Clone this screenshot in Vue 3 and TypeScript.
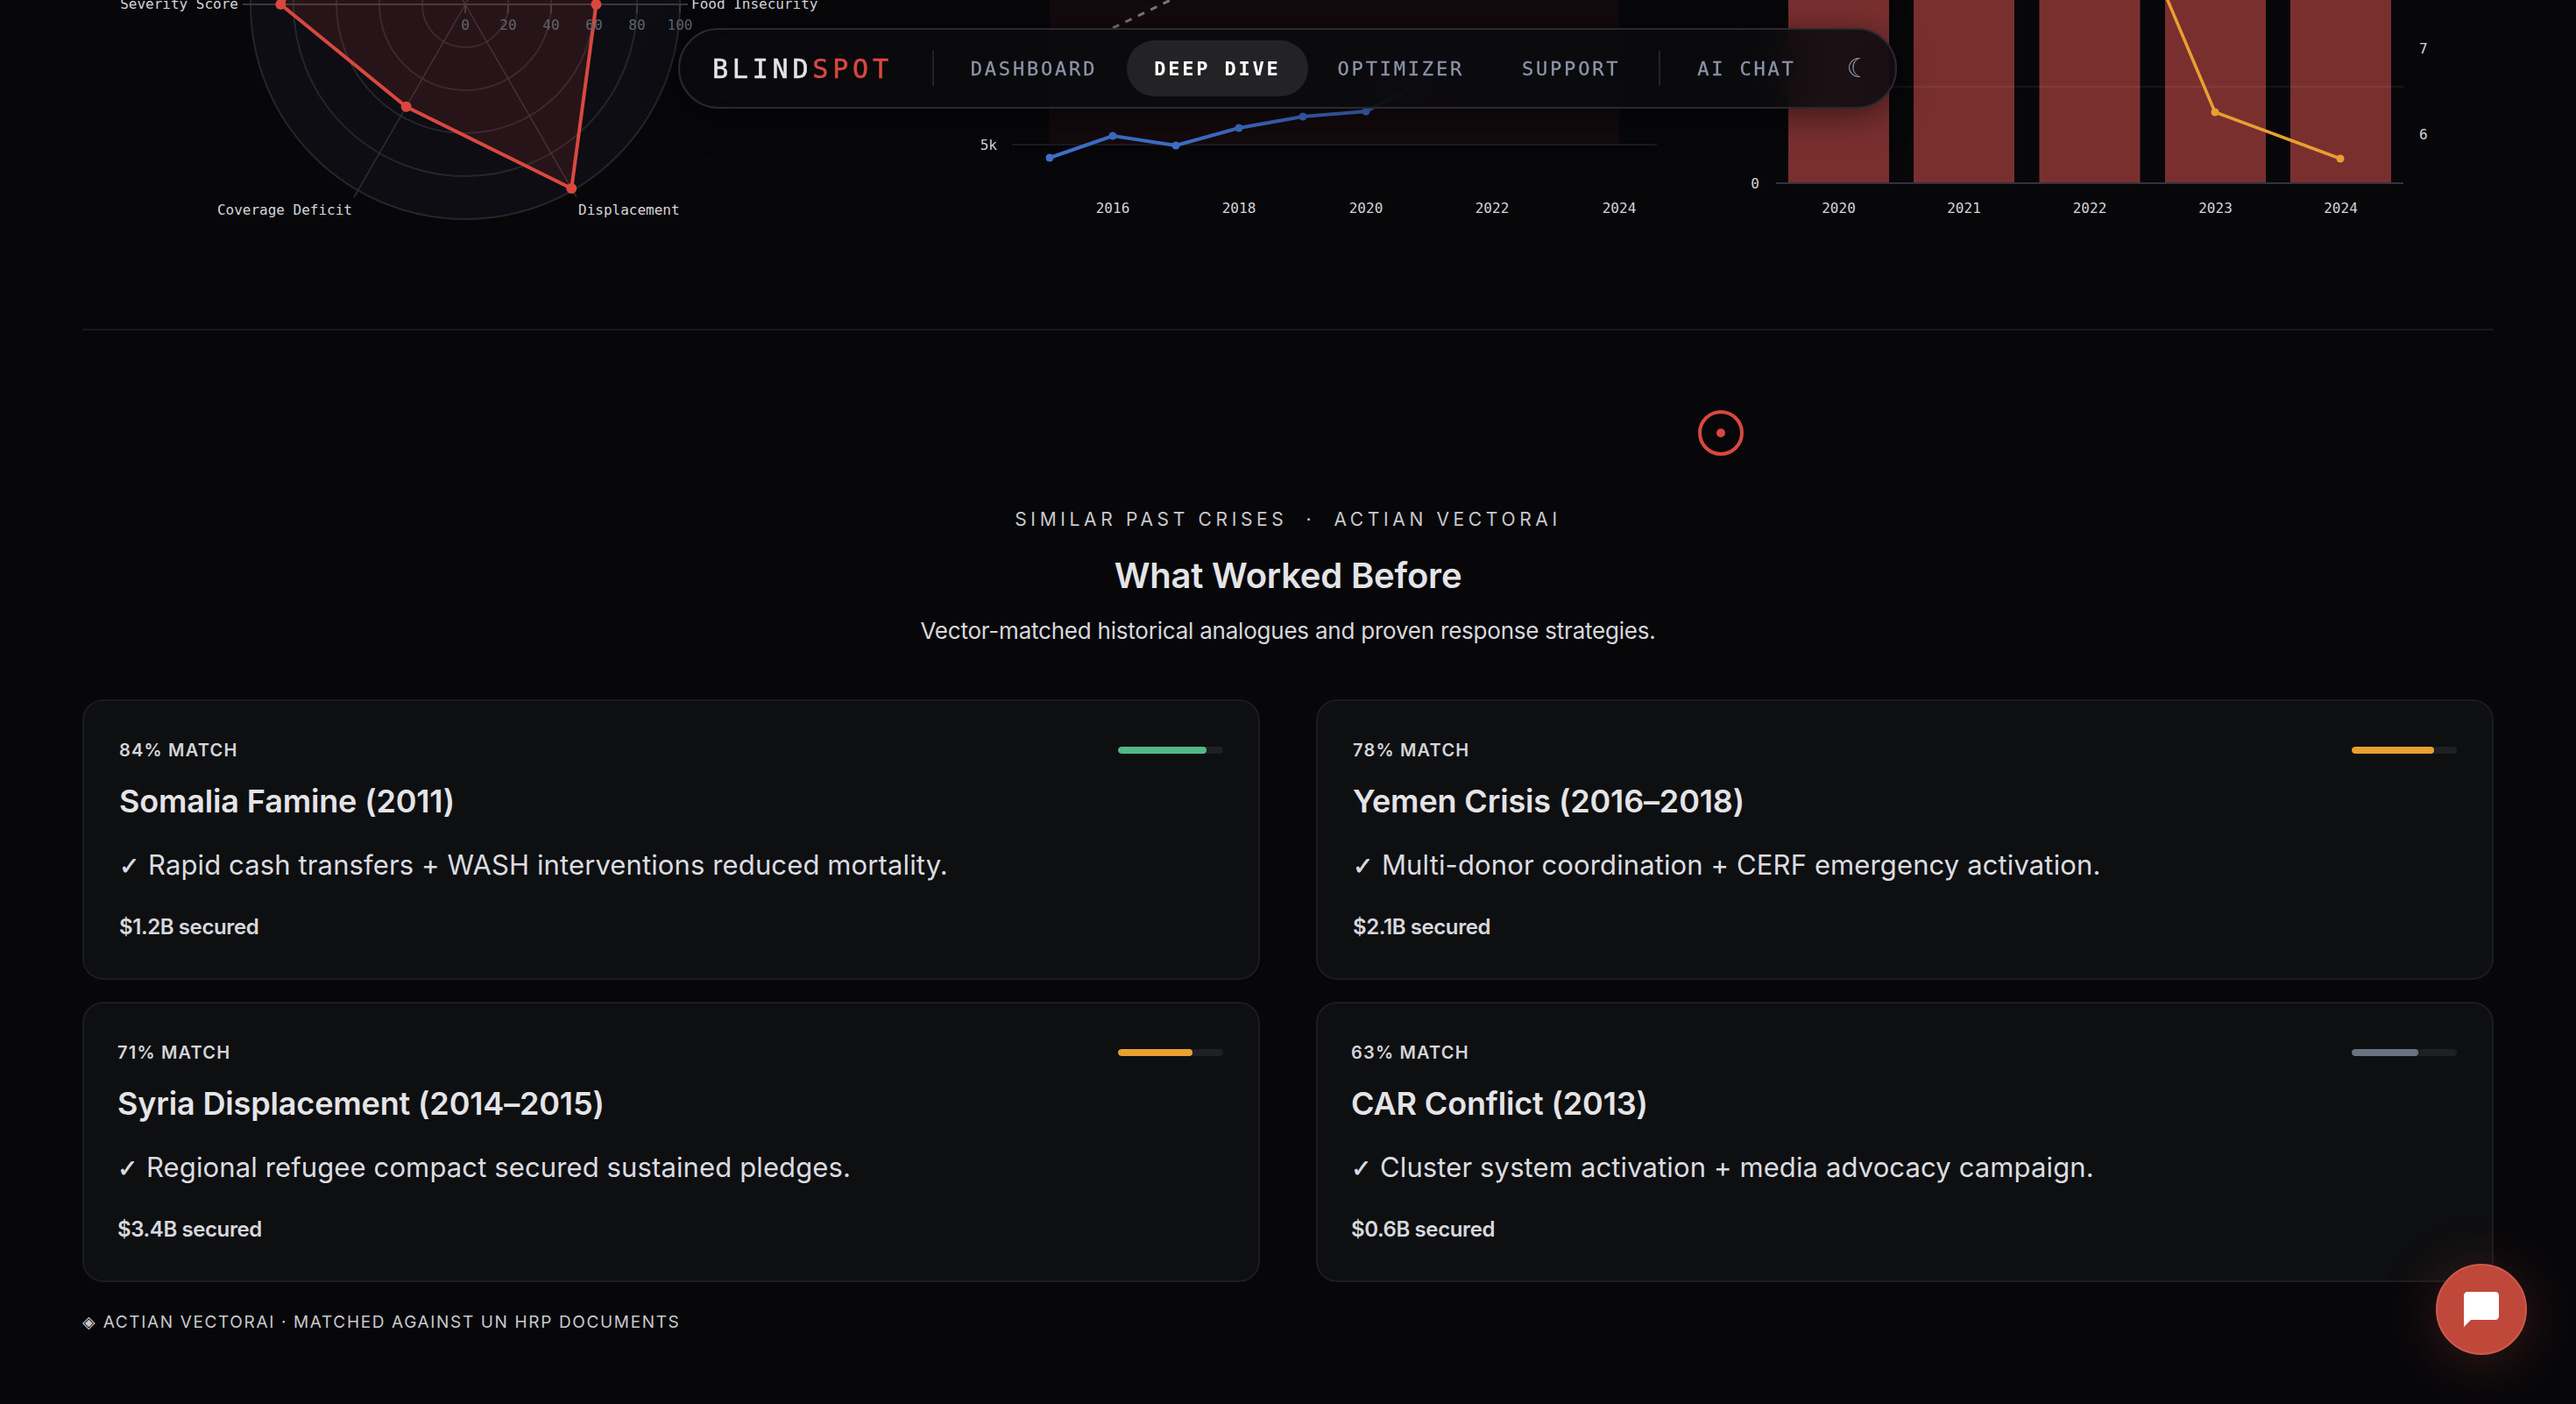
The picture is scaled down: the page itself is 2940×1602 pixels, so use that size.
<script setup lang="ts">
interface Crisis {
  match: number;
  color: string;
  title: string;
  note: string;
  secured: string;
}

const crises: Crisis[] = [
  { match: 84, color: '#52b788', title: 'Somalia Famine (2011)', note: 'Rapid cash transfers + WASH interventions reduced mortality.', secured: '$1.2B secured' },
  { match: 78, color: '#e8a030', title: 'Yemen Crisis (2016–2018)', note: 'Multi-donor coordination + CERF emergency activation.', secured: '$2.1B secured' },
  { match: 71, color: '#e8a030', title: 'Syria Displacement (2014–2015)', note: 'Regional refugee compact secured sustained pledges.', secured: '$3.4B secured' },
  { match: 63, color: '#6b7280', title: 'CAR Conflict (2013)', note: 'Cluster system activation + media advocacy campaign.', secured: '$0.6B secured' },
];

const navLinks = ['DASHBOARD', 'DEEP DIVE', 'OPTIMIZER', 'SUPPORT'];

// radar sits mostly above the fold, centre is right at the top edge
const cx = 531;
const cy = 5;
const unit = 2.45;
const radarTicks = [0, 20, 40, 60, 80, 100];
const radarAngles = [180, 120, 60, 0, 300, 240];
const radarValues = [86, 70, 80, 61, 99, 55];

function polar(value: number, deg: number) {
  const rad = (deg * Math.PI) / 180;
  return { x: cx + value * unit * Math.cos(rad), y: cy - value * unit * Math.sin(rad) };
}

const radarPoints = radarValues.map((v, i) => polar(v, radarAngles[i]));
const radarPolygon = radarPoints.map((p) => `${p.x},${p.y}`).join(' ');
const spokes = radarAngles.map((a) => polar(103.7, a));

const bluePoints = [
  [1198, 180],
  [1270, 155],
  [1342, 166],
  [1414, 146],
  [1487, 133],
  [1559, 127],
  [1631, 90],
];
const blueLine = bluePoints.map((p) => p.join(',')).join(' ');
const lineYears = [
  { x: 1270, label: '2016' },
  { x: 1414, label: '2018' },
  { x: 1559, label: '2020' },
  { x: 1703, label: '2022' },
  { x: 1848, label: '2024' },
];

const bars = [
  { x: 2041, year: '2020' },
  { x: 2184, year: '2021' },
  { x: 2327.5, year: '2022' },
  { x: 2471, year: '2023' },
  { x: 2614, year: '2024' },
];
</script>

<template>
  <div class="page">
    <section class="charts">
      <svg class="chart" width="866" height="375" viewBox="94 0 866 375">
        <circle :cx="cx" :cy="cy" :r="100 * unit" fill="#0d0d13" />
        <circle
          v-for="t in radarTicks.slice(1)"
          :key="t"
          :cx="cx"
          :cy="cy"
          :r="t * unit"
          fill="none"
          stroke="#25252b"
          stroke-width="2"
        />
        <line
          v-for="(s, i) in spokes"
          :key="i"
          :x1="cx"
          :y1="cy"
          :x2="s.x"
          :y2="s.y"
          stroke="#2e2e34"
          stroke-width="1.5"
        />
        <line x1="277" y1="5" x2="785" y2="5" stroke="#3a383c" stroke-width="2" />
        <line
          v-for="t in radarTicks"
          :key="'tick' + t"
          :x1="cx + t * unit"
          y1="5"
          :x2="cx + t * unit"
          y2="15"
          stroke="#3a383c"
          stroke-width="2"
        />
        <polygon :points="radarPolygon" fill="rgba(217,72,63,0.13)" stroke="#d9483f" stroke-width="4" />
        <circle v-for="(p, i) in radarPoints" :key="'pt' + i" :cx="p.x" :cy="p.y" r="6" fill="#d9483f" />
        <text
          v-for="t in radarTicks"
          :key="'lab' + t"
          class="tick"
          :x="cx + t * unit"
          y="34"
          text-anchor="middle"
        >{{ t }}</text>
        <text class="axis" x="272" y="10" text-anchor="end">Severity Score</text>
        <text class="axis" x="789" y="10">Food Insecurity</text>
        <text class="axis" x="402" y="245" text-anchor="end">Coverage Deficit</text>
        <text class="axis" x="660" y="245">Displacement</text>
      </svg>

      <svg class="chart" width="950" height="375" viewBox="960 0 950 375">
        <rect x="1198" y="0" width="650" height="165" fill="rgba(217,72,63,0.06)" />
        <line x1="1155" y1="165" x2="1891" y2="165" stroke="#1b1b1f" stroke-width="2" />
        <line x1="1270" y1="32" x2="1336" y2="0" stroke="#77777f" stroke-width="3" stroke-dasharray="8 8" />
        <polyline :points="blueLine" fill="none" stroke="#3f6fc9" stroke-width="4" />
        <circle v-for="(p, i) in bluePoints" :key="i" :cx="p[0]" :cy="p[1]" r="4.5" fill="#3f6fc9" />
        <text class="axis" x="1138" y="171" text-anchor="end">5k</text>
        <text
          v-for="y in lineYears"
          :key="y.label"
          class="axis"
          :x="y.x"
          y="243"
          text-anchor="middle"
        >{{ y.label }}</text>
      </svg>

      <svg class="chart" width="936" height="375" viewBox="1910 0 936 375">
        <rect v-for="b in bars" :key="b.year" :x="b.x" y="0" width="115" height="208" fill="#7a2f2f" />
        <line x1="2027" y1="99" x2="2743" y2="99" stroke="rgba(255,255,255,0.06)" stroke-width="2" />
        <line x1="2027" y1="209" x2="2743" y2="209" stroke="#33333f" stroke-width="2" />
        <polyline points="2473,-2 2528,128 2671,181" fill="none" stroke="#e8a030" stroke-width="3.5" />
        <circle cx="2528" cy="128" r="4.5" fill="#e8a030" />
        <circle cx="2671" cy="181" r="4.5" fill="#e8a030" />
        <text class="axis" x="2008" y="215" text-anchor="end">0</text>
        <text class="axis" x="2761" y="61">7</text>
        <text class="axis" x="2761" y="159">6</text>
        <text
          v-for="b in bars"
          :key="'y' + b.year"
          class="axis"
          :x="b.x + 57.5"
          y="243"
          text-anchor="middle"
        >{{ b.year }}</text>
      </svg>
    </section>

    <section class="similar">
      <header class="head">
        <p class="eyebrow">SIMILAR PAST CRISES &nbsp;·&nbsp; ACTIAN VECTORAI</p>
        <h2 class="title">What Worked Before</h2>
        <p class="sub">Vector-matched historical analogues and proven response strategies.</p>
      </header>

      <div class="grid">
        <article v-for="(c, i) in crises" :key="c.title" class="card" :class="{ shifted: i < 2 }">
          <div class="card-top">
            <span class="match">{{ c.match }}% MATCH</span>
            <span class="track">
              <span class="fill" :style="{ width: c.match + '%', background: c.color }"></span>
            </span>
          </div>
          <h3 class="card-title">{{ c.title }}</h3>
          <p class="note"><span class="check">✓</span>{{ c.note }}</p>
          <p class="secured">{{ c.secured }}</p>
        </article>
      </div>

      <p class="foot">◈ ACTIAN VECTORAI · MATCHED AGAINST UN HRP DOCUMENTS</p>
    </section>

    <nav class="nav">
      <span class="brand">BLIND<em>SPOT</em></span>
      <span class="sep"></span>
      <a v-for="l in navLinks" :key="l" class="link" :class="{ active: l === 'DEEP DIVE' }">{{ l }}</a>
      <span class="sep sep-right"></span>
      <a class="link">AI CHAT</a>
      <span class="moon">☾</span>
    </nav>

    <div class="cursor"><span class="cursor-dot"></span></div>

    <button class="fab" aria-label="Open chat">
      <svg width="48" height="48" viewBox="0 0 24 24" fill="#fff">
        <path d="M20 2H4c-1.1 0-2 .9-2 2v18l4-4h14c1.1 0 2-.9 2-2V4c0-1.1-.9-2-2-2z" />
      </svg>
    </button>
  </div>
</template>

<style>
html,
body {
  margin: 0;
  background: #07070a;
}
</style>

<style scoped>
.page {
  width: 2940px;
  height: 1602px;
  overflow: hidden;
  background: #07070a;
  color: #e4e4e7;
  font-family: Inter, "Noto Sans", sans-serif;
}
.charts {
  display: flex;
  height: 375px;
  margin: 0 94px;
  border-bottom: 2px solid #19191d;
}
.chart {
  display: block;
  flex: none;
  overflow: hidden;
}
.axis {
  font: 16px "DejaVu Sans Mono", monospace;
  fill: #d4d4d8;
}
.tick {
  font: 16px "DejaVu Sans Mono", monospace;
  fill: #5f636e;
}
.similar {
  padding: 201px 94px 0;
}
.head {
  text-align: center;
}
.eyebrow {
  margin: 0;
  font-size: 21px;
  line-height: 30px;
  letter-spacing: 4.65px;
  color: #c9c9ce;
}
.title {
  margin: 24px 0 0;
  font-size: 40px;
  line-height: 50px;
  font-weight: 600;
  letter-spacing: -0.2px;
}
.sub {
  margin: 18px 0 0;
  font-size: 26px;
  line-height: 40px;
  letter-spacing: -0.22px;
  color: #d8d8dc;
}
.grid {
  display: grid;
  grid-template-columns: 1344px 1344px;
  column-gap: 64px;
  row-gap: 25px;
  margin-top: 58px;
}
.card {
  box-sizing: border-box;
  height: 320px;
  padding: 42px 40px 0 38px;
  border: 2px solid #1b1c1f;
  border-radius: 24px;
  background: #0e0f11;
}
.card.shifted {
  padding-left: 40px;
}
.card-top {
  display: flex;
  align-items: center;
  justify-content: space-between;
  height: 28px;
}
.match {
  font-size: 20px;
  font-weight: 600;
  letter-spacing: 1.2px;
  color: #d4d4d8;
}
.track {
  width: 120px;
  height: 8px;
  border-radius: 4px;
  background: #1f2023;
  overflow: hidden;
}
.fill {
  display: block;
  height: 100%;
  border-radius: 4px;
}
.card-title {
  margin: 21px 0 0;
  font-size: 36px;
  line-height: 46px;
  font-weight: 600;
  letter-spacing: -0.15px;
}
.note {
  margin: 26px 0 0;
  font-size: 31px;
  line-height: 48px;
  letter-spacing: 0.12px;
  color: #dcdce0;
}
.check {
  display: inline-block;
  width: 33px;
  font-family: "DejaVu Sans", sans-serif;
  font-size: 28px;
  -webkit-text-stroke: 0.6px currentColor;
}
.secured {
  margin: 28px 0 0;
  font-size: 24px;
  line-height: 34px;
  font-weight: 600;
  letter-spacing: -0.4px;
  color: #d8d8dc;
}
.foot {
  margin: 32px 0 0;
  font-size: 19px;
  line-height: 28px;
  letter-spacing: 1.65px;
  color: #c9c9ce;
}
.nav {
  position: fixed;
  top: 32px;
  left: 774px;
  box-sizing: border-box;
  display: flex;
  align-items: center;
  width: 1391px;
  height: 92px;
  padding: 0 0 0 37px;
  border: 2px solid #29292e;
  border-radius: 46px;
  background: rgba(10, 10, 14, 0.85);
  backdrop-filter: blur(24px);
  box-shadow: 0 8px 40px rgba(0, 0, 0, 0.5);
  font-family: "DejaVu Sans Mono", monospace;
}
.brand {
  font-size: 30px;
  letter-spacing: 4.8px;
  color: #e4e4e7;
  -webkit-text-stroke: 0.5px currentColor;
}
.brand em {
  font-style: normal;
  color: #d9483f;
}
.sep {
  width: 2px;
  height: 40px;
  margin: 0 10px 0 45px;
  background: #232327;
}
.sep-right {
  margin: 0 10px 0 12px;
}
.link {
  display: flex;
  align-items: center;
  height: 64px;
  padding: 0 32px;
  border-radius: 32px;
  font-size: 22px;
  letter-spacing: 2.8px;
  color: #8b94a8;
  -webkit-text-stroke: 0.3px currentColor;
}
.link.active {
  padding: 0 31px;
  background: #232326;
  color: #fff;
  font-weight: 700;
  -webkit-text-stroke: 0;
}
.link + .link {
  margin-left: 2px;
}
.moon {
  margin-left: 26px;
  font-size: 30px;
  line-height: 1;
  color: #8b94a8;
}
.cursor {
  position: fixed;
  left: 1938px;
  top: 468px;
  box-sizing: border-box;
  display: flex;
  align-items: center;
  justify-content: center;
  width: 52px;
  height: 52px;
  border: 4px solid #d9483f;
  border-radius: 50%;
}
.cursor-dot {
  width: 10px;
  height: 10px;
  border-radius: 50%;
  background: #d9483f;
}
.fab {
  position: fixed;
  right: 56px;
  bottom: 56px;
  box-sizing: border-box;
  display: flex;
  align-items: center;
  justify-content: center;
  width: 104px;
  height: 104px;
  padding: 0;
  border: 2px solid #d0594c;
  border-radius: 50%;
  background: #c0483b;
  box-shadow: 0 8px 64px rgba(192, 72, 59, 0.28);
}
</style>
